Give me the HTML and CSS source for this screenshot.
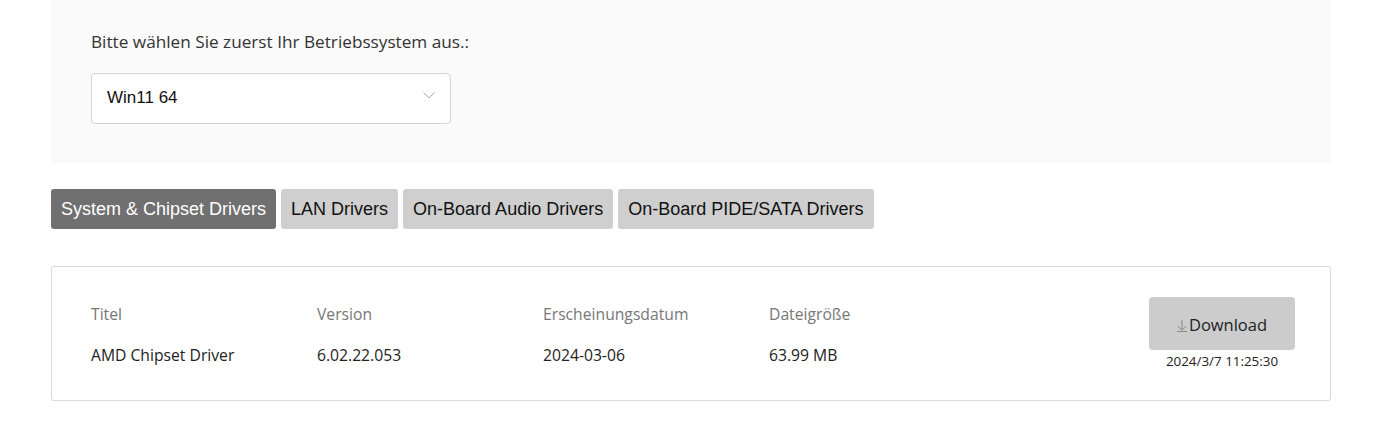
FILE: index.html
```html
<!DOCTYPE html>
<html lang="de">
<head>
<meta charset="utf-8">
<title>Treiber</title>
<link rel="stylesheet" href="styles.css">
</head>
<body>
<div class="wrap">
  <section class="os-panel">
    <p class="os-label">Bitte wählen Sie zuerst Ihr Betriebssystem aus.:</p>
    <div class="select">
      <span class="select-value">Win11 64</span>
      <svg class="chev" width="12" height="7" viewBox="0 0 12 7"><path d="M0.5 0.5 L6 6 L11.5 0.5" fill="none" stroke="#a0a8b8" stroke-width="1"/></svg>
    </div>
  </section>
  <nav class="tabs">
    <span class="tab active">System &amp; Chipset Drivers</span>
    <span class="tab">LAN Drivers</span>
    <span class="tab">On-Board Audio Drivers</span>
    <span class="tab">On-Board PIDE/SATA Drivers</span>
  </nav>
  <section class="card">
    <div class="cols">
      <div class="col"><div class="head">Titel</div><div class="val">AMD Chipset Driver</div></div>
      <div class="col"><div class="head">Version</div><div class="val">6.02.22.053</div></div>
      <div class="col"><div class="head">Erscheinungsdatum</div><div class="val">2024-03-06</div></div>
      <div class="col"><div class="head">Dateigröße</div><div class="val">63.99 MB</div></div>
    </div>
    <div class="dl">
      <div class="dl-btn"><svg class="arrow" width="10" height="13" viewBox="0 0 10 13"><path d="M5 0.5 V11 M0.8 7 L5 11.2 L9.2 7 M0 12.5 H10" fill="none" stroke="#888" stroke-width="1"/></svg>Download</div>
      <div class="dl-date">2024/3/7 11:25:30</div>
    </div>
  </section>
</div>
</body>
</html>
```
FILE: styles.css
```css
* { box-sizing: border-box; }
html, body { margin: 0; padding: 0; background: #fff; }
body { font-family: "Open Sans", "Noto Sans", sans-serif; color: #333; }
.wrap { margin: 0 49px 0 51px; }
.os-panel {
  background: #fafafa;
  padding: 29px 40px 39px;
  height: 163px;
}
.os-label {
  margin: 0 0 19px;
  font-size: 17.2px;
  line-height: 25px;
  color: #333;
}
.select {
  width: 360px;
  height: 51px;
  background: #fff;
  border: 1px solid #d4d4d4;
  border-radius: 4px;
  display: flex;
  align-items: center;
  justify-content: space-between;
  padding: 0 15px 0 15px;
}
.select-value {
  font-family: "Liberation Sans", Arial, sans-serif;
  font-size: 17px;
  color: #111;
  margin-top: -1px;
}
.chev { margin-top: -6px; }
.tabs {
  display: flex;
  gap: 5px;
  margin-top: 26px;
}
.tab {
  height: 40px;
  display: flex;
  align-items: center;
  padding: 0 10px;
  background: #cfcfcf;
  border-radius: 3px;
  font-family: "Liberation Sans", Arial, sans-serif;
  font-size: 18px;
  color: #111;
}
.tab.active { background: #707070; color: #fff; }
.card {
  margin-top: 37px;
  height: 135px;
  border: 1px solid #d9d9d9;
  border-radius: 3px;
  padding: 30px 35px 0 39px;
  display: flex;
  justify-content: space-between;
}
.cols { display: flex; padding-top: 6px; }
.col { width: 226px; }
.head { font-size: 15.7px; line-height: 22px; color: #777; }
.val { font-size: 15.7px; line-height: 22px; color: #222; margin-top: 19px; }
.dl { display: flex; flex-direction: column; align-items: center; width: 146px; }
.dl-btn {
  width: 146px;
  height: 53px;
  background: #cccccc;
  border-radius: 4px;
  display: flex;
  align-items: center;
  justify-content: center;
  font-size: 16.5px;
  color: #222;
  padding-top: 2px;
}
.arrow { margin-right: 2px; margin-top: 2px; }
.dl-date { font-size: 13.4px; color: #222; line-height: 20px; margin-top: 1px; }
```
